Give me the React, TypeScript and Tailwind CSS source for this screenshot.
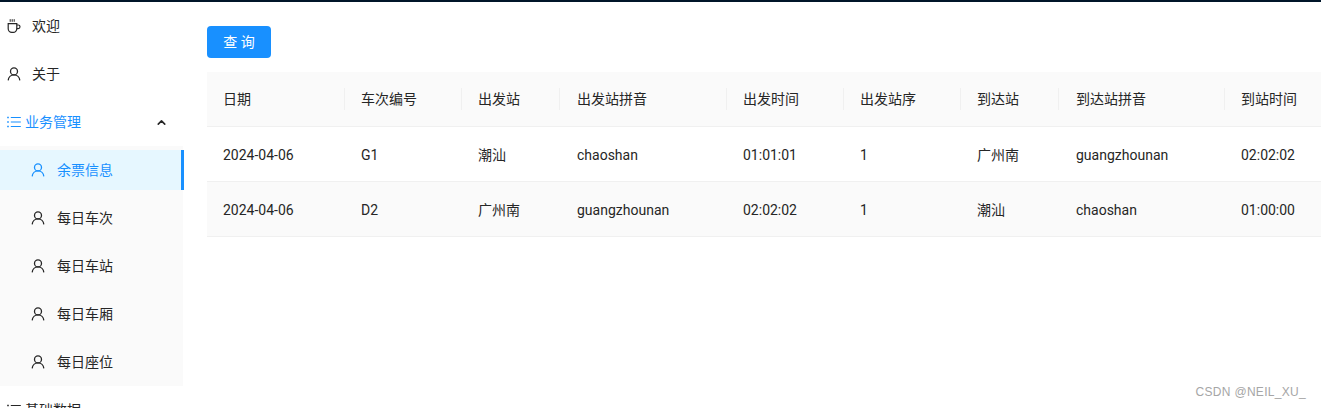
import React from "react";
import { ChevronUp, ChevronDown } from "lucide-react";

const FONT = 'Roboto, "Noto Sans CJK SC", sans-serif';

const cols = [
  { t: "日期", w: 138 },
  { t: "车次编号", w: 117 },
  { t: "出发站", w: 98 },
  { t: "出发站拼音", w: 167 },
  { t: "出发时间", w: 117 },
  { t: "出发站序", w: 117 },
  { t: "到达站", w: 98 },
  { t: "到达站拼音", w: 166 },
  { t: "到站时间", w: 96 },
];
const rows = [
  ["2024-04-06", "G1", "潮汕", "chaoshan", "01:01:01", "1", "广州南", "guangzhounan", "02:02:02"],
  ["2024-04-06", "D2", "广州南", "guangzhounan", "02:02:02", "1", "潮汕", "chaoshan", "01:00:00"],
];
const subs = ["每日车次", "每日车站", "每日车厢", "每日座位"];

function UserIcon() {
  return (
    <svg width="14" height="14" viewBox="0 0 14 14" fill="none" stroke="currentColor" strokeWidth="1.3" className="shrink-0">
      <circle cx="7" cy="4.4" r="3.5" />
      <path d="M1.2 13.4C1.4 10.2 3.9 7.9 7 7.9s5.6 2.3 5.8 5.5" />
    </svg>
  );
}
function CoffeeIcon() {
  return (
    <svg width="14" height="14" viewBox="0 0 14 14" fill="none" stroke="currentColor" strokeWidth="1.2" className="shrink-0">
      <path d="M3.2 0.2v2.6M5.2 0.2v2.6M7.2 0.2v2.6" strokeWidth="1" />
      <path d="M1.2 4.6h8.6v5.2a3.6 3.6 0 0 1-3.6 3.6H4.8a3.6 3.6 0 0 1-3.6-3.6z" />
      <path d="M9.8 6h1.4a1.5 1.5 0 0 1 0 3.6H9.7" />
    </svg>
  );
}
function ListIcon() {
  return (
    <svg width="14" height="14" viewBox="0 0 14 14" fill="none" stroke="currentColor" strokeWidth="1.1" className="shrink-0">
      <path d="M3.8 2.5h10M3.8 7h10M3.8 11.5h10" />
      <path d="M0.2 2.5h1.6M0.2 7h1.6M0.2 11.5h1.6" strokeWidth="1.4" />
    </svg>
  );
}

function Top({ icon, label }: { icon: React.ReactNode; label: string }) {
  return (
    <div className="flex h-12 items-center pl-[7px] text-[14px] text-[#262626]">
      {icon}
      <span className="ml-[11px]">{label}</span>
    </div>
  );
}

function Group({ label, open, blue }: { label: string; open: boolean; blue?: boolean }) {
  return (
    <div className={`flex h-12 shrink-0 items-center pl-[7px] pr-[16px] text-[14px] ${blue ? "text-[#1890ff]" : "text-[#262626]"}`}>
      <ListIcon />
      <span className="ml-[4px] flex-1">{label}</span>
      {open ? <ChevronUp size={13} strokeWidth={3} className="text-[#262626]" /> : <ChevronDown size={13} strokeWidth={3} className="text-[#262626]" />}
    </div>
  );
}

export default function App() {
  return (
    <div className="h-[408px] w-[1321px] overflow-hidden bg-white" style={{ fontFamily: FONT }}>
      <div className="h-[2px] bg-[#001529]" />
      <div className="relative flex h-[406px]">
        <aside className="w-[184px] shrink-0 overflow-hidden">
          <Top icon={<CoffeeIcon />} label="欢迎" />
          <Top icon={<UserIcon />} label="关于" />
          <Group label="业务管理" open blue />
          <div className="w-[183px] bg-[#fafafa] pt-1 pb-1">
            <div className="relative flex h-10 w-[184px] items-center bg-[#e6f7ff] pl-[31px] text-[14px] text-[#1890ff]">
              <UserIcon />
              <span className="ml-[12px]">余票信息</span>
              <span className="absolute right-0 top-0 h-full w-[3px] bg-[#1890ff]" />
            </div>
            {subs.map((s) => (
              <div key={s} className="mt-2 flex h-10 items-center pl-[31px] text-[14px] text-[#262626]">
                <UserIcon />
                <span className="ml-[12px]">{s}</span>
              </div>
            ))}
          </div>
          <Group label="基础数据" open={false} />
        </aside>

        <main className="flex-1 pl-[23px] pt-6">
          <button className="flex h-8 w-16 items-center justify-center rounded-sm bg-[#1890ff] text-[14px] text-white">
            查 询
          </button>
          <table className="mt-[14px] w-[1114px] table-fixed border-collapse text-[14px] text-[#262626]">
            <colgroup>
              {cols.map((c) => (
                <col key={c.t} style={{ width: c.w }} />
              ))}
            </colgroup>
            <thead>
              <tr className="h-[54px] border-b border-[#f0f0f0] bg-[#fafafa]">
                {cols.map((c, i) => (
                  <th
                    key={c.t}
                    className={`relative whitespace-nowrap pt-[2px] text-left font-normal ${i === 3 || i === 7 ? "pl-[17px]" : "pl-4"}`}
                  >
                    {c.t}
                    {i < cols.length - 1 && (
                      <span className="absolute right-0 top-1/2 h-[22px] w-px -translate-y-1/2 bg-[#f0f0f0]" />
                    )}
                  </th>
                ))}
              </tr>
            </thead>
            <tbody>
              {rows.map((r, ri) => (
                <tr key={ri} className={`h-[55px] border-b border-[#f0f0f0] ${ri === 1 ? "bg-[#fafafa]" : ""}`}>
                  {r.map((v, i) => (
                    <td key={i} className={`whitespace-nowrap pt-[3px] ${i === 3 || i === 7 ? "pl-[17px]" : "pl-4"}`}>
                      {v}
                    </td>
                  ))}
                </tr>
              ))}
            </tbody>
          </table>
        </main>
        <span
          className="absolute right-[15px] top-[381px] text-[12px] tracking-[0.3px] text-[#a6a6a6]"
          style={{ fontFamily: '"Liberation Sans", sans-serif' }}
        >
          CSDN @NEIL_XU_
        </span>
      </div>
    </div>
  );
}
